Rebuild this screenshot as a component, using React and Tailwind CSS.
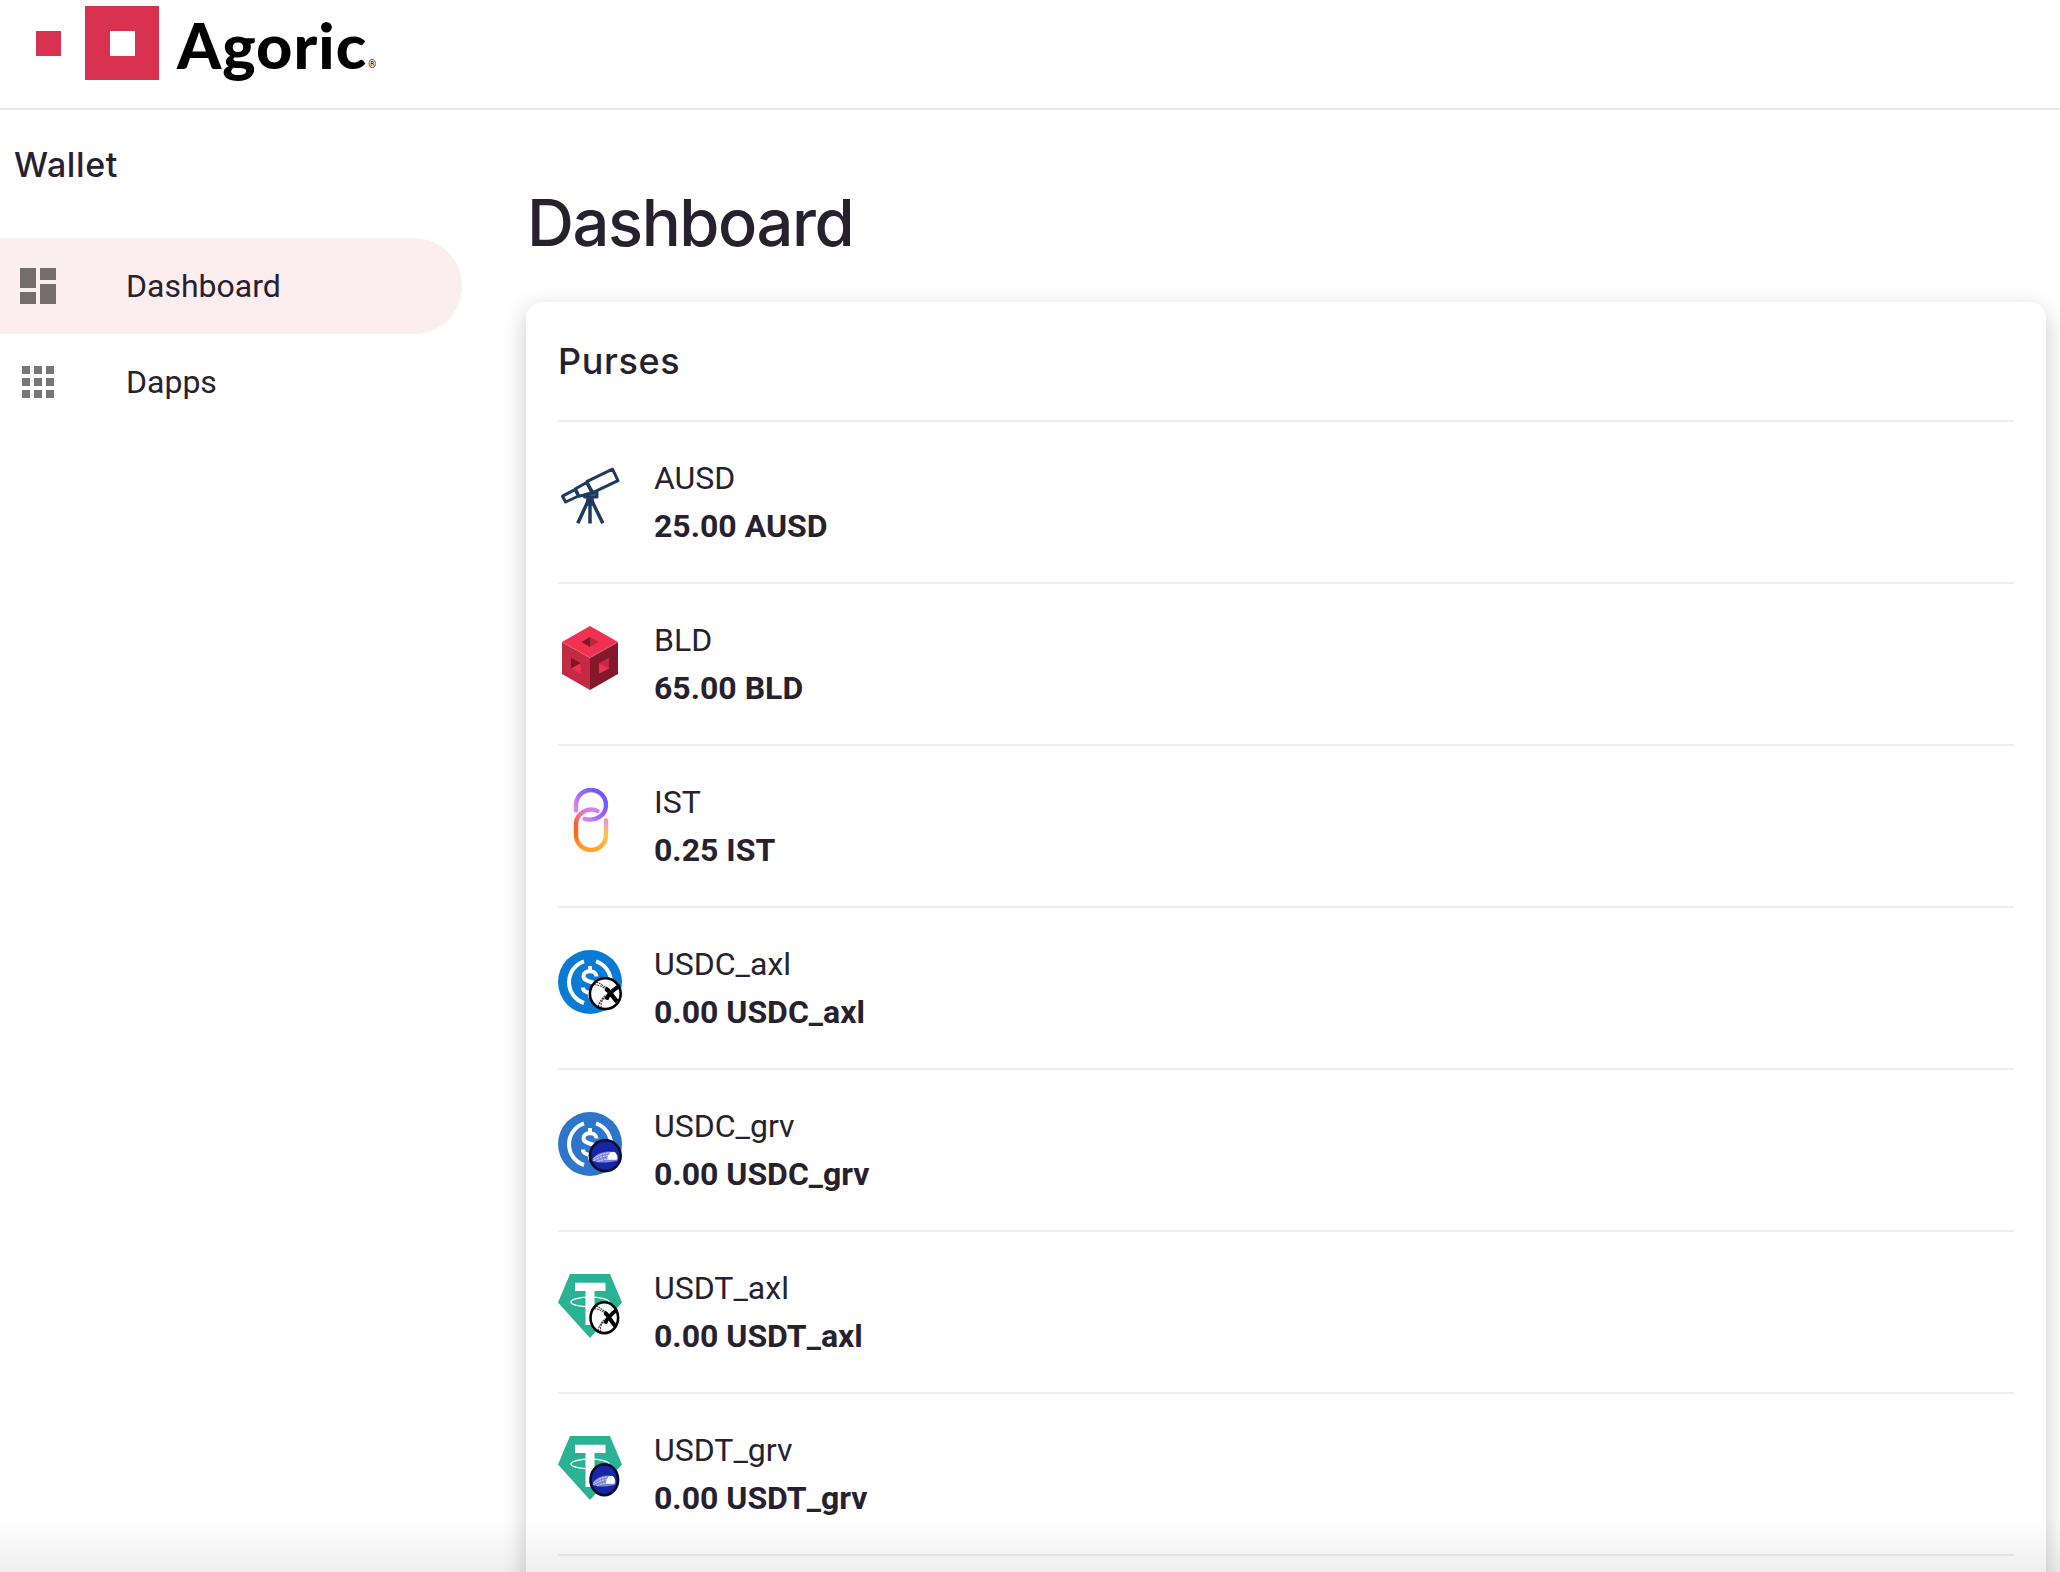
import React from "react";

const CrossMark = () => (
  <g>
    <path d="M-11-9C-5-9-1-6 3-2M-9-12C-3-9 0-7 4-2M-4 14C-5 9-3 5 2 2M-7 13C-6 8-3 4 1 1" stroke="#333" strokeWidth="1.100" fill="none" strokeDasharray="2 .8" />
    <path d="M0-5C4-4 5 1 12 8" stroke="#000" strokeWidth="4.4" fill="none" />
    <path d="M13-7C8-4 3 0 1 6" stroke="#000" strokeWidth="4" fill="none" />
  </g>
);

const CometMark = () => (
  <g>
    <path d="M-13 5C-12-1-2-5 6-4C12-3 14 2 12 5C4 7-6 8-13 5Z" fill="#7f86d6" />
    <path d="M-12 3C-6-1 0-3 7-3M-12 5C-6 2-2 0 3 0M-8 6C-4 4 0 4 3 3" stroke="#dfe1fa" strokeWidth=".9" fill="none" strokeDasharray="2.5 1" />
    <path d="M2 4C2-1 5-4 8-4C11-4 13 1 11 4Z" fill="#fff" />
  </g>
);

const Badge = ({ kind, cx, rx }) => (
  <g transform={`translate(${cx} 43.7)`}>
    <ellipse rx={rx} ry="15.4" fill={kind === "axl" ? "#fff" : "#1527a8"} />
    <g transform={`scale(${rx / 15.4} 1)`}>{kind === "axl" ? <CrossMark /> : <CometMark />}</g>
    <ellipse rx={rx} ry="15.4" fill="none" stroke={kind === "axl" ? "#000" : "#080c26"} strokeWidth="2.6" />
  </g>
);

const Telescope = () => (
  <svg viewBox="0 0 64 64" className="size-16" fill="none" stroke="#1d3a61" strokeWidth="3" strokeLinejoin="round">
    <path d="M28.7 17.7L54.5 5.2L60 16.6L34.8 28.6ZM17.5 24.8L28.7 18.5L34 29L21 32.3ZM4.5 32.2L17 25.6L20.5 32L7.6 38Z" />
    <path d="M27.5 30.5L39 28.5V33H26.5Z" fill="#5c7594" />
    <path d="M31 35L19.8 59.3M32 34V59.5M33 35L44.8 59.3" strokeWidth="3.5" />
    <path d="M30 34H34L35 40H29Z" fill="#17325a" />
  </svg>
);

const Cube = () => (
  <svg viewBox="0 0 64 64" className="size-16">
    <path d="M32 0L60 16L32 31.7L4 16Z" fill="#f03152" />
    <path d="M4 16L32 31.7V64L4 48Z" fill="#c52a45" />
    <path d="M60 16L32 31.7V64L60 48Z" fill="#85192c" />
    <path d="M4 16L32 31.7L60 16" stroke="#e0768a" strokeWidth=".6" fill="none" />
    <path d="M23.5 16L32 11V21Z" fill="#7d1729" />
    <path d="M40.7 16L32 11V21Z" fill="#bb2740" />
    <path d="M13 31.7L22.7 37.3L13 43Z" fill="#7d1729" />
    <path d="M13 42.5L22.7 37.3V47.5Z" fill="#f03152" />
    <path d="M51 31.7L41 37.3L51 42.5Z" fill="#a92239" />
    <path d="M51 31.7V42.5L41 47.5V37.3Z" fill="#c52a45" />
    <path d="M41 37.3L51 42.5L41 47.5Z" fill="#f03152" />
  </svg>
);

const Links = () => (
  <svg viewBox="0 0 64 64" className="size-16" fill="none" strokeWidth="4.4" strokeLinecap="round">
    <defs>
      <linearGradient id="linkTop" gradientUnits="userSpaceOnUse" x1="46" y1="10" x2="22" y2="30">
        <stop stopColor="#7258ff" />
        <stop offset=".5" stopColor="#a566fb" />
        <stop offset="1" stopColor="#e58bea" />
      </linearGradient>
      <linearGradient id="linkLeft" gradientUnits="userSpaceOnUse" x1="36" y1="22" x2="30" y2="62">
        <stop stopColor="#d67fea" />
        <stop offset=".4" stopColor="#ff5f2a" />
        <stop offset=".7" stopColor="#ff6a18" />
        <stop offset="1" stopColor="#ffa52c" />
      </linearGradient>
      <linearGradient id="linkRight" gradientUnits="userSpaceOnUse" x1="48" y1="32" x2="40" y2="62">
        <stop stopColor="#e79ad0" />
        <stop offset=".5" stopColor="#ffc444" />
        <stop offset="1" stopColor="#ffa52c" />
      </linearGradient>
    </defs>
    <path d="M18 22.5V17A15 15 0 0 1 48 17C48 27 38 34 26.5 30.8" stroke="url(#linkTop)" />
    <path d="M39.5 23C29 18.500 18 26 18 36V47A15 15 0 0 0 33 62" stroke="url(#linkLeft)" />
    <path d="M33 62A15 15 0 0 0 48 47V32.500" stroke="url(#linkRight)" />
  </svg>
);

const Usdc = ({ kind }) => (
  <svg viewBox="0 0 64 64" className="size-16">
    <circle cx="32" cy="32" r="32" fill={kind === "axl" ? "#0a7ad4" : "#2d76ca"} />
    <g fill="none" stroke="#fff" strokeWidth="4">
      <path d="M26 11.300A22 22 0 0 0 26 53M38 11.300A22 22 0 0 1 38 53" />
      <path d="M38.500 26.500C38.500 19.500 25.500 19.500 25.500 26C25.500 33.500 39 30 39 37.500C39 44.500 25 44.500 25 37.500M32 16V21.500M32 42V47.500" />
    </g>
    <Badge kind={kind} cx="47.3" rx={15.4} />
  </svg>
);

const Usdt = ({ kind }) => (
  <svg viewBox="0 0 64 64" className="size-16">
    <path d="M12 0H52L64 28.500L32 64L0 28.500Z" fill="#2ab294" />
    <ellipse cx="32" cy="28" rx="19" ry="4.800" fill="none" stroke="#fff" strokeWidth="1.300" />
    <path d="M17 8.700H47.500V17H36.500V51H27.500V17H17Z" fill="#fff" />
    <Badge kind={kind} cx="46.3" rx={13.8} />
  </svg>
);

const purses = [
  { name: "AUSD", amount: "25.00", icon: <Telescope /> },
  { name: "BLD", amount: "65.00", icon: <Cube /> },
  { name: "IST", amount: "0.25", icon: <Links /> },
  { name: "USDC_axl", amount: "0.00", icon: <Usdc kind="axl" /> },
  { name: "USDC_grv", amount: "0.00", icon: <Usdc kind="grv" /> },
  { name: "USDT_axl", amount: "0.00", icon: <Usdt kind="axl" /> },
  { name: "USDT_grv", amount: "0.00", icon: <Usdt kind="grv" /> },
];

const Logo = () => (
  <div className="flex h-[108px] items-start pl-9">
    <div className="mt-[31px] size-[25px] bg-[#d93251]" />
    <div className="mt-[6px] ml-6 flex size-[74px] items-center justify-center bg-[#d93251]">
      <div className="size-[25px] bg-white" />
    </div>
    <span className="mt-[9px] ml-[18px] font-['Lato',sans-serif] text-[63px] leading-[72px] font-black tracking-[1px] text-black">
      Agoric
    </span>
    <span className="mt-[60px] ml-px font-['Roboto',sans-serif] text-[10px] leading-[10px] text-black">®</span>
  </div>
);

const NavItem = ({ label, active, children }) => (
  <div className={`flex h-24 w-[462px] items-center rounded-r-full pl-[14px] ${active ? "bg-[#fceeee]" : ""}`}>
    <svg viewBox="0 0 24 24" className="mr-16 size-12" fill="rgba(0,0,0,0.54)">
      {children}
    </svg>
    <span className="text-[32px] leading-[48px]">{label}</span>
  </div>
);

export default function App() {
  return (
    <div className="relative h-[1572px] overflow-hidden bg-white font-['Roboto',sans-serif] text-[#27212f]">
      <header className="border-b-2 border-[#eaeaee]">
        <Logo />
      </header>
      <div className="flex">
        <nav className="w-[526px] shrink-0">
          <h2 className="mb-[45px] pt-[27px] pl-[14px] font-['Inter',sans-serif] text-[34px] leading-[56px] font-medium tracking-[0.6px]">
            Wallet
          </h2>
          <NavItem label="Dashboard" active>
            <path d="M3 13h8V3H3v10zm0 8h8v-6H3v6zm10 0h8V11h-8v10zm0-18v6h8V3h-8z" />
          </NavItem>
          <NavItem label="Dapps">
            <path d="M4 8h4V4H4v4zm6 12h4v-4h-4v4zm-6 0h4v-4H4v4zm0-6h4v-4H4v4zm6 0h4v-4h-4v4zm6-10v4h4V4h-4zm-6 4h4V4h-4v4zm6 6h4v-4h-4v4zm0 6h4v-4h-4v4z" />
          </NavItem>
        </nav>
        <main className="w-[1520px] shrink-0">
          <h1 className="pt-[73px] pb-[39px] pl-px font-['Inter',sans-serif] text-[65px] leading-[80px] font-medium tracking-[-1.4px]">
            Dashboard
          </h1>
          <section className="h-[1400px] rounded-[16px] bg-white px-8 shadow-[0_8px_24px_rgba(0,0,0,0.22)]">
            <h2 className="h-[118px] pt-[32px] font-['Inter',sans-serif] text-[36px] leading-[54px] font-medium tracking-[0.6px]">
              Purses
            </h2>
            {purses.map((p) => (
              <div key={p.name} className="flex h-[162px] border-t-2 border-[#ededed]">
                <div className="mt-[42px] mr-8 size-16">{p.icon}</div>
                <div className="pt-8 text-[32px] leading-[48px]">
                  <p>{p.name}</p>
                  <p className="font-bold">
                    {p.amount} {p.name}
                  </p>
                </div>
              </div>
            ))}
            <div className="border-t-2 border-[#ededed]" />
          </section>
        </main>
      </div>
      <div className="pointer-events-none absolute inset-x-0 bottom-0 h-[54px] bg-linear-to-b from-transparent to-black/[0.065]" />
    </div>
  );
}
